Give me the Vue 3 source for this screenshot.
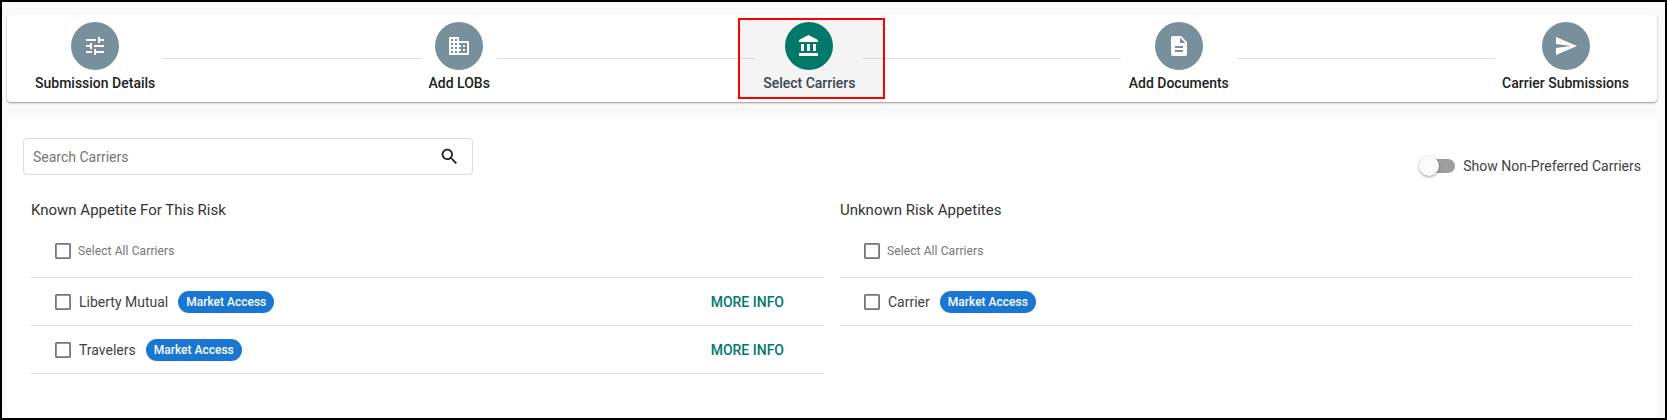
<template>
    <div class="page">
        <div class="stepper-card">
            <div class="stepper">
                <template v-for="(step, i) in steps" :key="step.label">
                    <div class="step" :class="{ active: step.active }">
                        <div class="step-circle">
                            <svg viewBox="0 0 24 24" width="24" height="24"><path :d="step.icon" fill="#fff" /></svg>
                        </div>
                        <span class="step-label">{{ step.label }}</span>
                    </div>
                    <div v-if="i < steps.length - 1" class="connector"></div>
                </template>
            </div>
        </div>

        <div class="content-card">
            <div class="toolbar">
                <div class="search-box">
                    <span class="search-placeholder">Search Carriers</span>
                    <svg viewBox="0 0 24 24" width="21" height="21"><path :d="searchIcon" fill="#212121" /></svg>
                </div>
                <div class="toggle-wrap">
                    <span class="toggle"><span class="toggle-knob"></span></span>
                    <span class="toggle-label">Show Non-Preferred Carriers</span>
                </div>
            </div>

            <div class="columns">
                <section v-for="col in columns" :key="col.title" class="column">
                    <h3 class="column-title">{{ col.title }}</h3>
                    <div class="select-all">
                        <svg class="checkbox" viewBox="3 3 18 18" width="16" height="16"><path :d="checkIcon" fill="#757575" /></svg>
                        <span>Select All Carriers</span>
                    </div>
                    <div v-for="row in col.rows" :key="row" class="carrier-row">
                        <svg class="checkbox" viewBox="3 3 18 18" width="16" height="16"><path :d="checkIcon" fill="#757575" /></svg>
                        <span class="carrier-name">{{ row }}</span>
                        <span class="badge">Market Access</span>
                        <a v-if="col.moreInfo" class="more-info">MORE INFO</a>
                    </div>
                </section>
            </div>
        </div>
    </div>
</template>

<script setup>
const searchIcon = 'M15.5 14h-.79l-.28-.27C15.41 12.59 16 11.11 16 9.5 16 5.91 13.09 3 9.5 3S3 5.91 3 9.5 5.91 16 9.5 16c1.61 0 3.09-.59 4.23-1.57l.27.28v.79l5 4.99L20.49 19l-4.99-5zm-6 0C7.01 14 5 11.99 5 9.5S7.01 5 9.5 5 14 7.01 14 9.5 11.99 14 9.5 14z';
const checkIcon = 'M19 5v14H5V5h14m0-2H5c-1.1 0-2 .9-2 2v14c0 1.1.9 2 2 2h14c1.1 0 2-.9 2-2V5c0-1.1-.9-2-2-2z';

const steps = [
    { label: 'Submission Details', icon: 'M3 17v2h6v-2H3zM3 5v2h10V5H3zm10 16v-2h8v-2h-8v-2h-2v6h2zM7 9v2H3v2h4v2h2V9H7zm14 4v-2H11v2h10zm-6-4h2V7h4V5h-4V3h-2v6z' },
    { label: 'Add LOBs', icon: 'M12 7V3H2v18h20V7H12zM6 19H4v-2h2v2zm0-4H4v-2h2v2zm0-4H4V9h2v2zm0-4H4V5h2v2zm4 12H8v-2h2v2zm0-4H8v-2h2v2zm0-4H8V9h2v2zm0-4H8V5h2v2zm10 12h-8v-2h2v-2h-2v-2h2v-2h-2V9h8v10zm-2-8h-2v2h2v-2zm0 4h-2v2h2v-2z' },
    { label: 'Select Carriers', active: true, icon: 'M4 10v7h3v-7H4zm6 0v7h3v-7h-3zM2 22h19v-3H2v3zm14-12v7h3v-7h-3zm-4.5-9L2 6v2h19V6l-9.5-5z' },
    { label: 'Add Documents', icon: 'M14 2H6c-1.1 0-1.99.9-1.99 2L4 20c0 1.1.89 2 1.99 2H18c1.1 0 2-.9 2-2V8l-6-6zm2 16H8v-2h8v2zm0-4H8v-2h8v2zm-3-5V3.5L18.5 9H13z' },
    { label: 'Carrier Submissions', icon: 'M2.01 21L23 12 2.01 3 2 10l15 2-15 2z' }
];

const columns = [
    { title: 'Known Appetite For This Risk', moreInfo: true, rows: ['Liberty Mutual', 'Travelers'] },
    { title: 'Unknown Risk Appetites', moreInfo: false, rows: ['Carrier'] }
];
</script>

<style>
html, body {
    margin: 0;
    background: #000;
}
</style>

<style scoped>
.page {
    box-sizing: border-box;
    width: 1667px;
    height: 420px;
    border: 2px solid #000;
    background-color: #fafafa;
    padding: 12px 8px 0 5px;
    overflow: hidden;
    font-family: Roboto, "Liberation Sans", sans-serif;
    color: #212121;
    display: flex;
    flex-direction: column;
    gap: 16px;
}

.stepper-card {
    background: #fff;
    border-radius: 4px;
    height: 88px;
    flex-shrink: 0;
    box-shadow: 0 1px 2px rgba(0, 0, 0, 0.4);
    padding: 0 20px;
}

.stepper {
    display: flex;
    align-items: flex-start;
}

.step {
    position: relative;
    display: flex;
    flex-direction: column;
    align-items: center;
    padding: 8px 8px 0;
    z-index: 0;
}

.step.active::before {
    content: "";
    position: absolute;
    top: 4px;
    bottom: -6px;
    left: -17px;
    right: -22px;
    border: 2px solid #f00;
    background: rgba(0, 0, 0, 0.045);
    z-index: -1;
}

.step-circle {
    width: 48px;
    height: 48px;
    border-radius: 50%;
    background-color: #78909c;
    display: flex;
    align-items: center;
    justify-content: center;
}

.active .step-circle {
    background-color: #00796b;
}

.step-label {
    font-size: 14px;
    font-weight: 500;
    line-height: 20px;
    margin-top: 3px;
    white-space: nowrap;
}

.active .step-label {
    color: #37474f;
}

.connector {
    flex: 1;
    height: 1px;
    margin-top: 44px;
    background-color: #e0e0e0;
}

.content-card {
    flex: 1;
    background: #fff;
    border-radius: 4px;
    padding: 20px 24px 0 16px;
}

.toolbar {
    display: flex;
    justify-content: space-between;
    align-items: flex-start;
}

.search-box {
    box-sizing: border-box;
    width: 450px;
    height: 37px;
    border: 1px solid #dcdcdc;
    border-radius: 4px;
    display: flex;
    align-items: center;
    justify-content: space-between;
    padding: 0 12px 0 9px;
}

.search-placeholder {
    font-size: 14px;
    color: #757575;
}

.toggle-wrap {
    display: flex;
    align-items: center;
    gap: 8px;
    margin-top: 20px;
    margin-right: -8px;
}

.toggle {
    position: relative;
    display: block;
    width: 34px;
    height: 14px;
    border-radius: 7px;
    background-color: #9e9e9e;
}

.toggle-knob {
    position: absolute;
    left: -2px;
    top: -3px;
    width: 20px;
    height: 20px;
    border-radius: 50%;
    background-color: #fafafa;
    box-shadow: 0 1px 3px rgba(0, 0, 0, 0.4);
}

.toggle-label {
    font-size: 14px;
    color: #424242;
}

.columns {
    display: grid;
    grid-template-columns: 793px 793px;
    column-gap: 16px;
    margin-top: 25px;
    margin-left: 8px;
}

.column-title {
    margin: 0;
    font-size: 15px;
    font-weight: 400;
    line-height: 20px;
    color: #333;
}

.select-all {
    display: flex;
    align-items: center;
    gap: 7px;
    height: 51px;
    margin-top: 7px;
    padding: 0 0 3px 24px;
    font-size: 12px;
    letter-spacing: 0.1px;
    color: #757575;
    border-bottom: 1px solid #e0e0e0;
    box-sizing: border-box;
}

.carrier-row {
    display: flex;
    align-items: center;
    height: 48px;
    box-sizing: border-box;
    padding-left: 24px;
    border-bottom: 1px solid #e0e0e0;
}

.carrier-name {
    font-size: 14px;
    color: #424242;
    margin-left: 8px;
}

.badge {
    margin-left: 10px;
    height: 22px;
    line-height: 22px;
    padding: 0 8px;
    border-radius: 11px;
    background-color: #1976d2;
    color: #fff;
    font-size: 12px;
    font-weight: 500;
}

.more-info {
    margin-left: auto;
    margin-right: 40px;
    font-size: 14px;
    font-weight: 500;
    color: #00796b;
}
</style>
